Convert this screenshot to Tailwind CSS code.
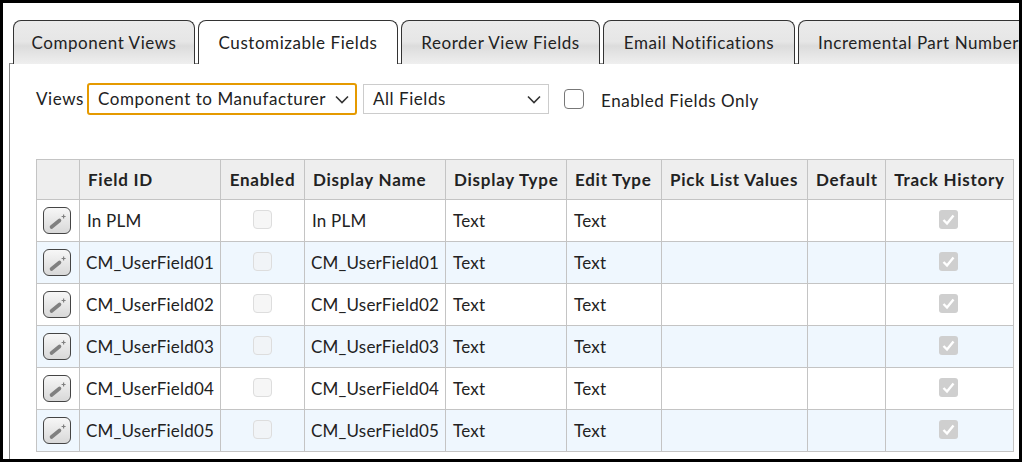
<!DOCTYPE html>
<html lang="en">
<head>
  <meta charset="UTF-8" />
  <title>Customizable Fields</title>
  <script src="https://cdn.jsdelivr.net/npm/@tailwindcss/browser@4"></script>
</head>
<body class="bg-white font-['Lato',sans-serif] text-[17px] tracking-[0.55px] text-[#222]">
<div class="w-[1022px] h-[462px] overflow-hidden border-[3px] border-black bg-white">
  <!-- Tabs -->
  <div class="flex gap-[3px] pl-[10px] pt-[17px] h-[60px] w-[1200px]">
    <div class="w-[182px] h-[44px] rounded-t-lg border border-b-0 border-[#333] bg-[linear-gradient(#ebebeb_0%,#e6e6e6_48%,#dcdcdc_58%,#efefef_100%)] flex items-center justify-center">Component Views</div>
    <div class="relative z-10 w-[200px] h-[44px] rounded-t-lg border border-b-0 border-[#333] bg-white flex items-center justify-center">Customizable Fields</div>
    <div class="w-[199px] h-[44px] rounded-t-lg border border-b-0 border-[#333] bg-[linear-gradient(#ebebeb_0%,#e6e6e6_48%,#dcdcdc_58%,#efefef_100%)] flex items-center justify-center">Reorder View Fields</div>
    <div class="w-[192px] h-[44px] rounded-t-lg border border-b-0 border-[#333] bg-[linear-gradient(#ebebeb_0%,#e6e6e6_48%,#dcdcdc_58%,#efefef_100%)] flex items-center justify-center">Email Notifications</div>
    <div class="w-[240px] h-[44px] rounded-t-lg border border-b-0 border-[#333] bg-[linear-gradient(#ebebeb_0%,#e6e6e6_48%,#dcdcdc_58%,#efefef_100%)] flex items-center justify-start pl-[19px] whitespace-nowrap">Incremental Part Number</div>
  </div>
  <!-- Panel -->
  <div class="ml-[6px] w-[1100px] h-[400px] border-l border-t border-[#888] pl-[26px]">
    <div class="flex items-center h-[32px] mt-[19px]">
      <span class="w-[51px]">Views</span>
      <div class="w-[270px] h-[32px] border-2 border-[#e59a00] rounded-[3px] flex items-center justify-between pl-[9px] pr-[6px]">
        <span>Component to Manufacturer</span>
        <svg width="14" height="9" viewBox="0 0 14 9" fill="none" stroke="#333" stroke-width="1.6"><path d="M1 1.5l6 6 6-6" /></svg>
      </div>
      <div class="ml-[6px] w-[186px] h-[30px] border border-[#ccc] flex items-center justify-between pl-[9px] pr-[7px]">
        <span>All Fields</span>
        <svg width="14" height="9" viewBox="0 0 14 9" fill="none" stroke="#333" stroke-width="1.6"><path d="M1 1.5l6 6 6-6" /></svg>
      </div>
      <div class="ml-[15px] w-[20px] h-[20px] border border-[#777] rounded-[4px] bg-white"></div>
      <span class="ml-[17px] mt-[3px]">Enabled Fields Only</span>
    </div>
    <table class="mt-[44px] table-fixed border-collapse w-[977px]">
      <colgroup>
        <col class="w-[43px]" /><col class="w-[141px]" /><col class="w-[84px]" /><col class="w-[141px]" /><col class="w-[121px]" /><col class="w-[95px]" /><col class="w-[146px]" /><col class="w-[78px]" /><col class="w-[128px]" />
      </colgroup>
      <thead class="tracking-[0.75px] whitespace-nowrap">
        <tr class="h-[40px] bg-[#eeeeee] text-left">
          <th class="border border-[#c4c4c4]"></th>
          <th class="border border-[#c4c4c4] pl-[8px] font-bold">Field ID</th>
          <th class="border border-[#c4c4c4] text-center font-bold">Enabled</th>
          <th class="border border-[#c4c4c4] pl-[8px] font-bold">Display Name</th>
          <th class="border border-[#c4c4c4] pl-[8px] font-bold">Display Type</th>
          <th class="border border-[#c4c4c4] pl-[8px] font-bold">Edit Type</th>
          <th class="border border-[#c4c4c4] pl-[8px] font-bold">Pick List Values</th>
          <th class="border border-[#c4c4c4] pl-[8px] font-bold">Default</th>
          <th class="border border-[#c4c4c4] text-center font-bold">Track History</th>
        </tr>
      </thead>
      <tbody class="tracking-[0.2px]">
        <tr class="h-[42px] bg-white">
          <td class="border border-[#c4c4c4] pl-[6px]"><div class="w-[28px] h-[27px] rounded-[6px] border border-[#444] bg-gradient-to-b from-[#f7f7f7] to-[#d8d8d8] flex items-center justify-center"><svg width="18" height="18" viewBox="0 0 18 18"><path d="M3.500 15l8-6.500" stroke="#808080" stroke-width="3.600" stroke-linecap="round" /><path d="M15 2.500h1.200v1.400h1.400v1.200h-1.400v1.400H15V5.100h-1.400V3.900H15z" fill="#808080" /></svg></div></td>
          <td class="border border-[#c4c4c4] px-[7px]">In PLM</td>
          <td class="border border-[#c4c4c4]"><div class="mx-auto mb-[3px] w-[19px] h-[19px] rounded-[4px] border border-[#ddd] bg-[#f6f6f6]"></div></td>
          <td class="border border-[#c4c4c4] px-[7px]">In PLM</td>
          <td class="border border-[#c4c4c4] px-[7px]">Text</td>
          <td class="border border-[#c4c4c4] px-[7px]">Text</td>
          <td class="border border-[#c4c4c4]"></td>
          <td class="border border-[#c4c4c4]"></td>
          <td class="border border-[#c4c4c4] pr-[2px]"><div class="mx-auto mb-[3px] w-[19px] h-[19px] rounded-[3px] bg-[#cfcfcf] flex items-center justify-center"><svg width="15" height="15" viewBox="0 0 15 15" fill="none" stroke="#fff" stroke-width="2.4"><path d="M2.500 8l3.500 3.500 6.500-8" /></svg></div></td>
        </tr>
        <tr class="h-[42px] bg-[#eff7fe]">
          <td class="border border-[#c4c4c4] pl-[6px]"><div class="w-[28px] h-[27px] rounded-[6px] border border-[#444] bg-gradient-to-b from-[#f7f7f7] to-[#d8d8d8] flex items-center justify-center"><svg width="18" height="18" viewBox="0 0 18 18"><path d="M3.500 15l8-6.500" stroke="#808080" stroke-width="3.600" stroke-linecap="round" /><path d="M15 2.500h1.200v1.400h1.400v1.200h-1.400v1.400H15V5.100h-1.400V3.900H15z" fill="#808080" /></svg></div></td>
          <td class="border border-[#c4c4c4] px-[6px]">CM_UserField01</td>
          <td class="border border-[#c4c4c4]"><div class="mx-auto mb-[3px] w-[19px] h-[19px] rounded-[4px] border border-[#ddd] bg-[#f1f4f7]"></div></td>
          <td class="border border-[#c4c4c4] px-[6px]">CM_UserField01</td>
          <td class="border border-[#c4c4c4] px-[7px]">Text</td>
          <td class="border border-[#c4c4c4] px-[7px]">Text</td>
          <td class="border border-[#c4c4c4]"></td>
          <td class="border border-[#c4c4c4]"></td>
          <td class="border border-[#c4c4c4] pr-[2px]"><div class="mx-auto mb-[3px] w-[19px] h-[19px] rounded-[3px] bg-[#cfcfcf] flex items-center justify-center"><svg width="15" height="15" viewBox="0 0 15 15" fill="none" stroke="#fff" stroke-width="2.4"><path d="M2.500 8l3.500 3.500 6.500-8" /></svg></div></td>
        </tr>
        <tr class="h-[42px] bg-white">
          <td class="border border-[#c4c4c4] pl-[6px]"><div class="w-[28px] h-[27px] rounded-[6px] border border-[#444] bg-gradient-to-b from-[#f7f7f7] to-[#d8d8d8] flex items-center justify-center"><svg width="18" height="18" viewBox="0 0 18 18"><path d="M3.500 15l8-6.500" stroke="#808080" stroke-width="3.600" stroke-linecap="round" /><path d="M15 2.500h1.200v1.400h1.400v1.200h-1.400v1.400H15V5.100h-1.400V3.900H15z" fill="#808080" /></svg></div></td>
          <td class="border border-[#c4c4c4] px-[6px]">CM_UserField02</td>
          <td class="border border-[#c4c4c4]"><div class="mx-auto mb-[3px] w-[19px] h-[19px] rounded-[4px] border border-[#ddd] bg-[#f6f6f6]"></div></td>
          <td class="border border-[#c4c4c4] px-[6px]">CM_UserField02</td>
          <td class="border border-[#c4c4c4] px-[7px]">Text</td>
          <td class="border border-[#c4c4c4] px-[7px]">Text</td>
          <td class="border border-[#c4c4c4]"></td>
          <td class="border border-[#c4c4c4]"></td>
          <td class="border border-[#c4c4c4] pr-[2px]"><div class="mx-auto mb-[3px] w-[19px] h-[19px] rounded-[3px] bg-[#cfcfcf] flex items-center justify-center"><svg width="15" height="15" viewBox="0 0 15 15" fill="none" stroke="#fff" stroke-width="2.4"><path d="M2.500 8l3.500 3.500 6.500-8" /></svg></div></td>
        </tr>
        <tr class="h-[42px] bg-[#eff7fe]">
          <td class="border border-[#c4c4c4] pl-[6px]"><div class="w-[28px] h-[27px] rounded-[6px] border border-[#444] bg-gradient-to-b from-[#f7f7f7] to-[#d8d8d8] flex items-center justify-center"><svg width="18" height="18" viewBox="0 0 18 18"><path d="M3.500 15l8-6.500" stroke="#808080" stroke-width="3.600" stroke-linecap="round" /><path d="M15 2.500h1.200v1.400h1.400v1.200h-1.400v1.400H15V5.100h-1.400V3.900H15z" fill="#808080" /></svg></div></td>
          <td class="border border-[#c4c4c4] px-[6px]">CM_UserField03</td>
          <td class="border border-[#c4c4c4]"><div class="mx-auto mb-[3px] w-[19px] h-[19px] rounded-[4px] border border-[#ddd] bg-[#f1f4f7]"></div></td>
          <td class="border border-[#c4c4c4] px-[6px]">CM_UserField03</td>
          <td class="border border-[#c4c4c4] px-[7px]">Text</td>
          <td class="border border-[#c4c4c4] px-[7px]">Text</td>
          <td class="border border-[#c4c4c4]"></td>
          <td class="border border-[#c4c4c4]"></td>
          <td class="border border-[#c4c4c4] pr-[2px]"><div class="mx-auto mb-[3px] w-[19px] h-[19px] rounded-[3px] bg-[#cfcfcf] flex items-center justify-center"><svg width="15" height="15" viewBox="0 0 15 15" fill="none" stroke="#fff" stroke-width="2.4"><path d="M2.500 8l3.500 3.500 6.500-8" /></svg></div></td>
        </tr>
        <tr class="h-[42px] bg-white">
          <td class="border border-[#c4c4c4] pl-[6px]"><div class="w-[28px] h-[27px] rounded-[6px] border border-[#444] bg-gradient-to-b from-[#f7f7f7] to-[#d8d8d8] flex items-center justify-center"><svg width="18" height="18" viewBox="0 0 18 18"><path d="M3.500 15l8-6.500" stroke="#808080" stroke-width="3.600" stroke-linecap="round" /><path d="M15 2.500h1.200v1.400h1.400v1.200h-1.400v1.400H15V5.100h-1.400V3.900H15z" fill="#808080" /></svg></div></td>
          <td class="border border-[#c4c4c4] px-[6px]">CM_UserField04</td>
          <td class="border border-[#c4c4c4]"><div class="mx-auto mb-[3px] w-[19px] h-[19px] rounded-[4px] border border-[#ddd] bg-[#f6f6f6]"></div></td>
          <td class="border border-[#c4c4c4] px-[6px]">CM_UserField04</td>
          <td class="border border-[#c4c4c4] px-[7px]">Text</td>
          <td class="border border-[#c4c4c4] px-[7px]">Text</td>
          <td class="border border-[#c4c4c4]"></td>
          <td class="border border-[#c4c4c4]"></td>
          <td class="border border-[#c4c4c4] pr-[2px]"><div class="mx-auto mb-[3px] w-[19px] h-[19px] rounded-[3px] bg-[#cfcfcf] flex items-center justify-center"><svg width="15" height="15" viewBox="0 0 15 15" fill="none" stroke="#fff" stroke-width="2.4"><path d="M2.500 8l3.500 3.500 6.500-8" /></svg></div></td>
        </tr>
        <tr class="h-[42px] bg-[#eff7fe]">
          <td class="border border-[#c4c4c4] pl-[6px]"><div class="w-[28px] h-[27px] rounded-[6px] border border-[#444] bg-gradient-to-b from-[#f7f7f7] to-[#d8d8d8] flex items-center justify-center"><svg width="18" height="18" viewBox="0 0 18 18"><path d="M3.500 15l8-6.500" stroke="#808080" stroke-width="3.600" stroke-linecap="round" /><path d="M15 2.500h1.200v1.400h1.400v1.200h-1.400v1.400H15V5.100h-1.400V3.900H15z" fill="#808080" /></svg></div></td>
          <td class="border border-[#c4c4c4] px-[6px]">CM_UserField05</td>
          <td class="border border-[#c4c4c4]"><div class="mx-auto mb-[3px] w-[19px] h-[19px] rounded-[4px] border border-[#ddd] bg-[#f1f4f7]"></div></td>
          <td class="border border-[#c4c4c4] px-[6px]">CM_UserField05</td>
          <td class="border border-[#c4c4c4] px-[7px]">Text</td>
          <td class="border border-[#c4c4c4] px-[7px]">Text</td>
          <td class="border border-[#c4c4c4]"></td>
          <td class="border border-[#c4c4c4]"></td>
          <td class="border border-[#c4c4c4] pr-[2px]"><div class="mx-auto mb-[3px] w-[19px] h-[19px] rounded-[3px] bg-[#cfcfcf] flex items-center justify-center"><svg width="15" height="15" viewBox="0 0 15 15" fill="none" stroke="#fff" stroke-width="2.4"><path d="M2.500 8l3.500 3.500 6.500-8" /></svg></div></td>
        </tr>
      </tbody>
    </table>
  </div>
</div>
</body>
</html>
